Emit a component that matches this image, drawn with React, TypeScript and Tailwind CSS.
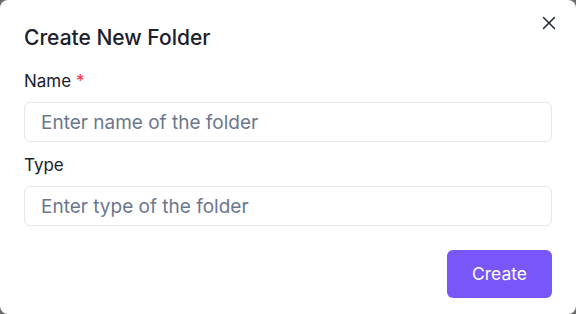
import { X } from "lucide-react";

const App = () => {
  return (
    <div className="w-[576px] h-[314px] bg-[#6b6b6b]" style={{ fontFamily: "Inter, 'Noto Sans', sans-serif" }}>
      <div className="relative w-full h-full bg-white rounded-lg px-6 pt-6 pb-4 flex flex-col">
        <button className="absolute top-[8px] right-[12px] p-1 text-[#1e2533]">
          <X size={22} strokeWidth={1.6} />
        </button>

        <h2 className="text-[21px] leading-7 font-medium text-[#1a202c] mb-[17px]">Create New Folder</h2>

        <div className="flex flex-col">
          <label className="text-[17px] leading-6 text-[#1a202c] mb-[9px]">
            Name <span className="text-red-500">*</span>
          </label>
          <input
            className="h-10 w-full rounded-md border border-[#e2e8f0] px-4 text-[19px] text-[#1a202c] placeholder:text-[#6b778c] outline-none"
            placeholder="Enter name of the folder"
          />
        </div>

        <div className="flex flex-col mt-[11px]">
          <label className="text-[17px] leading-6 text-[#1a202c] mb-[9px]">Type</label>
          <input
            className="h-10 w-full rounded-md border border-[#e2e8f0] px-4 text-[19px] text-[#1a202c] placeholder:text-[#6b778c] outline-none"
            placeholder="Enter type of the folder"
          />
        </div>

        <div className="flex justify-end mt-6">
          <button className="h-12 w-[105px] rounded-md bg-[#7856f7] text-white text-[17.5px]">Create</button>
        </div>
      </div>
    </div>
  );
};

export default App;
